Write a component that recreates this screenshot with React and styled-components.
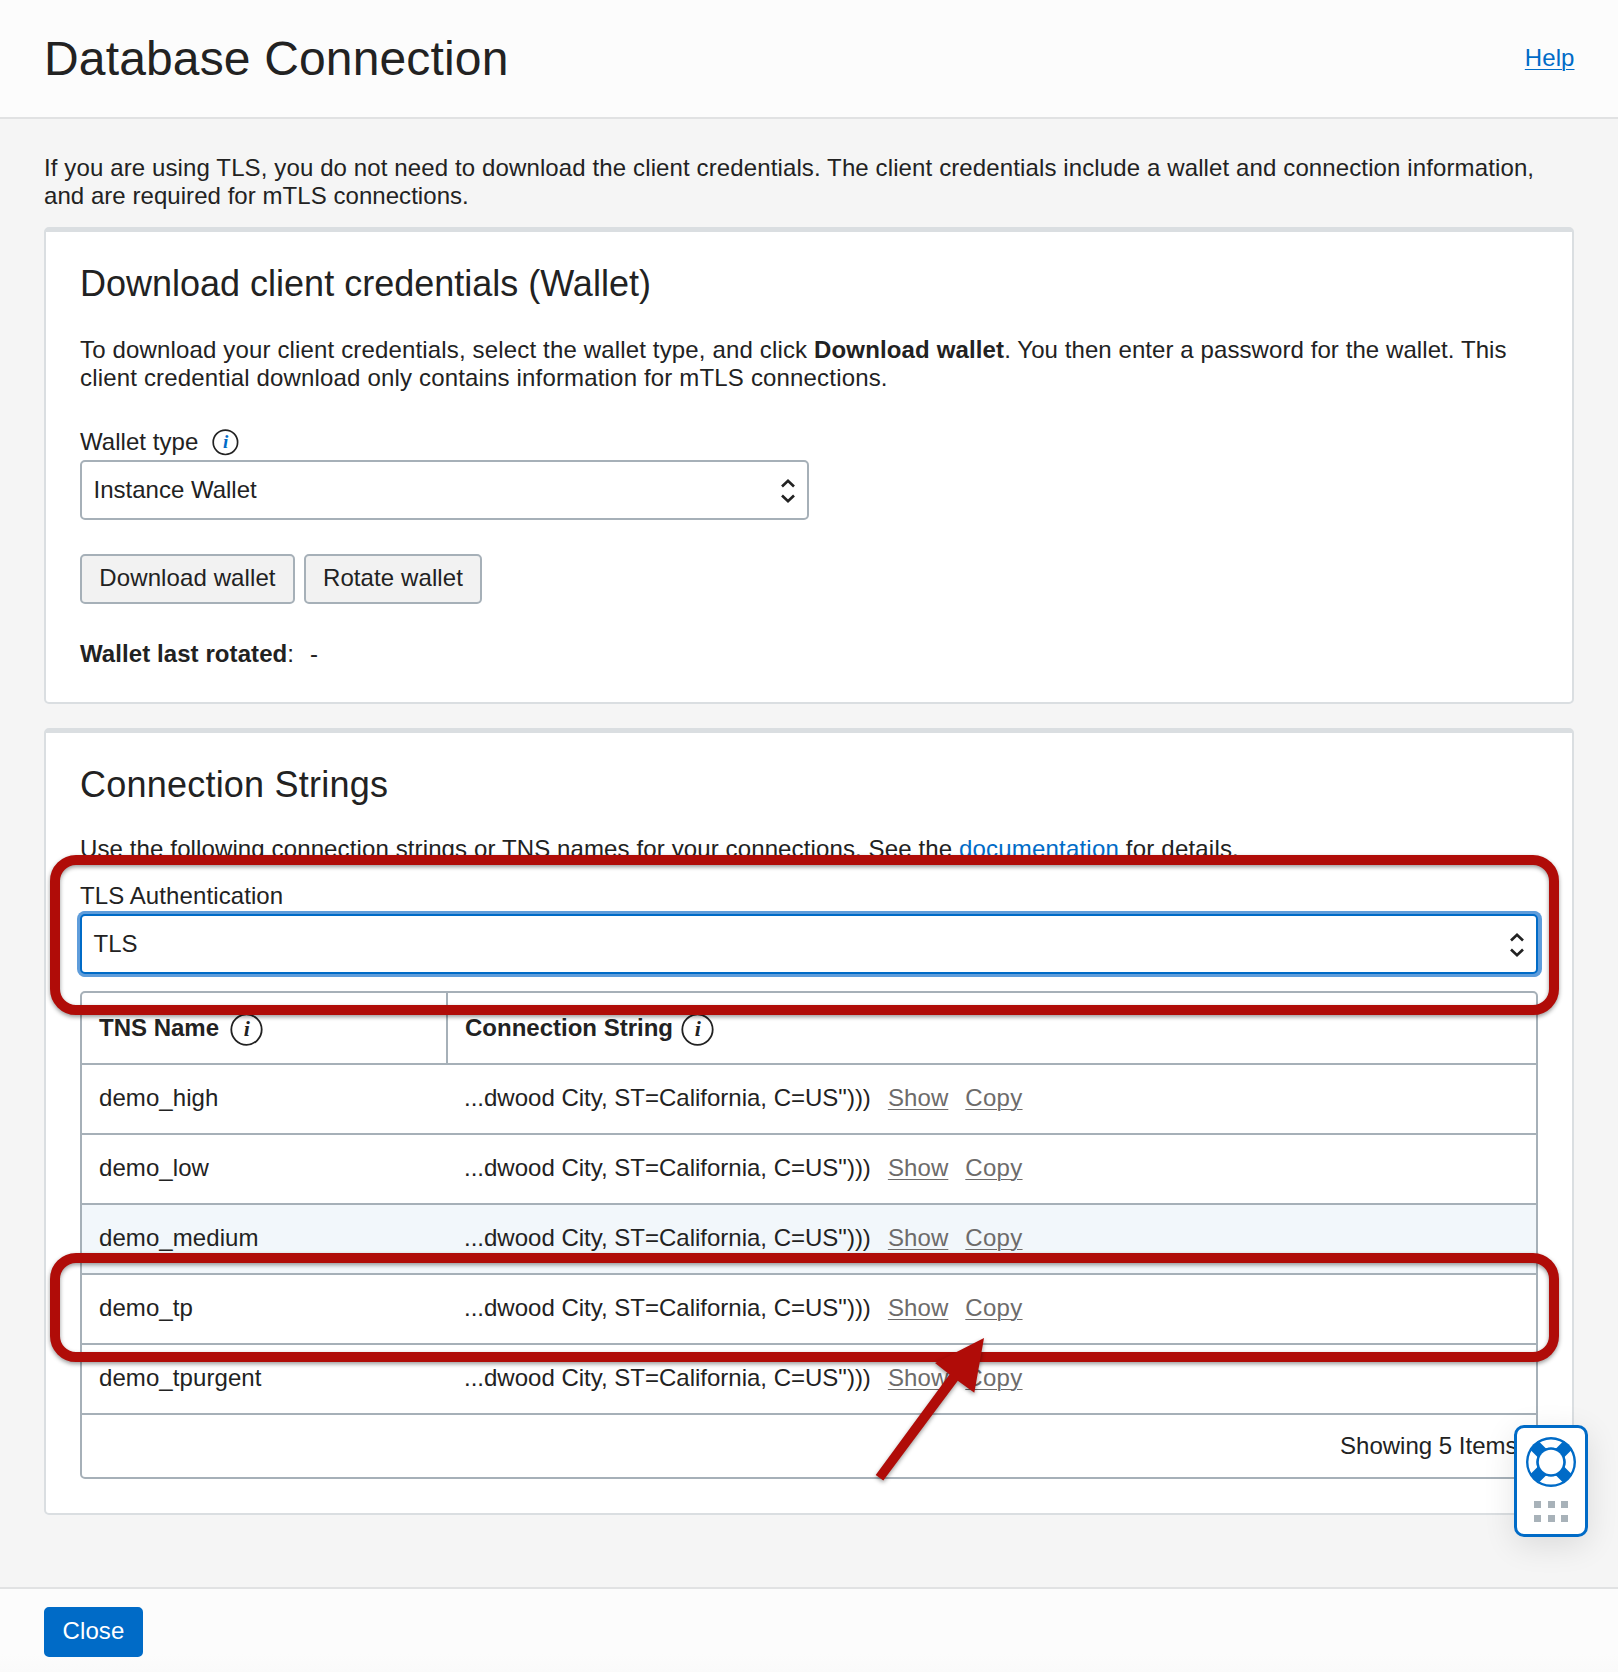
import React from 'react';
import styled, { createGlobalStyle, css } from 'styled-components';

const ink = '#222222';
const blue = '#006bc7';
const line = '#a6b0b8';
const cardLine = '#dadee1';
const annotation = '#b00c08';

const GlobalStyle = createGlobalStyle`
  *, *::before, *::after { box-sizing: border-box; }
  body {
    margin: 0;
    background: #f5f5f5;
    color: ${ink};
    font: 24px/28px "Liberation Sans", Arial, sans-serif;
  }
`;

const Page = styled.div`
  position: relative;
  display: flex;
  flex-direction: column;
  width: 1618px;
  height: 1672px;
  overflow: hidden;
  background: #f5f5f5;
`;

const Header = styled.header`
  display: flex;
  justify-content: space-between;
  align-items: flex-start;
  height: 119px;
  padding: 32px 43.5px 0 44px;
  background: #fcfcfc;
  border-bottom: 2px solid #e1e2e3;
`;

const Title = styled.h1`
  margin: 0;
  font-size: 48px;
  font-weight: 400;
  line-height: 54px;
  letter-spacing: 0.15px;
`;

const Link = styled.a`
  color: ${(p) => (p.$muted ? '#6d6b6a' : blue)};
  text-decoration: underline;
  text-decoration-thickness: 1px;
  text-underline-offset: 3px;
  letter-spacing: ${(p) => p.$track || 0}px;
`;

const HelpLink = styled(Link)`
  margin-top: 12px;
`;

const Main = styled.main`
  flex: 1;
  padding: 35px 44px 0;
`;

const Tracked = styled.span`
  letter-spacing: ${(p) => p.$track}px;
`;

const Strong = styled.strong`
  font-weight: 700;
  letter-spacing: ${(p) => p.$track || 0.08}px;
`;

const Text = styled.p`
  margin: 0;
  white-space: nowrap;
`;

const Card = styled.section`
  margin-top: ${(p) => p.$gap}px;
  padding: 31px 34px ${(p) => p.$bottom}px;
  background: #fff;
  border: 2px solid ${cardLine};
  border-top-width: 5px;
  border-radius: 5px;
`;

const CardTitle = styled.h2`
  margin: 0 0 ${(p) => p.$after}px;
  font-size: 36px;
  font-weight: 400;
  line-height: 41px;
  letter-spacing: ${(p) => p.$track}px;
`;

const Label = styled.label`
  display: flex;
  align-items: flex-start;
  gap: 14px;
  height: 28px;
  margin: ${(p) => p.$before}px 0 ${(p) => p.$after}px;
  letter-spacing: ${(p) => p.$track || 0}px;
`;

const SelectBox = styled.div`
  display: flex;
  justify-content: space-between;
  align-items: flex-start;
  width: ${(p) => (p.$half ? '729px' : '100%')};
  height: 60px;
  padding: 14px 12px 0 11.5px;
  background: #fff;
  border: 2px solid ${line};
  border-radius: 5px;
  ${(p) =>
    p.$focused &&
    css`
      border-color: ${blue};
      box-shadow: 0 0 0 3px #5f9ddb, 1px 0 0 3px #5f9ddb;
    `}
`;

const Chevrons = styled.svg`
  width: 14px;
  height: 26px;
  margin-top: 2px;
`;

const ButtonRow = styled.div`
  display: flex;
  gap: 9px;
  margin-top: 34px;
`;

const Button = styled.button`
  display: block;
  width: ${(p) => p.$width}px;
  height: 50px;
  padding: 0 0 2px;
  border: 2px solid ${(p) => (p.$primary ? blue : line)};
  border-radius: 5px;
  background: ${(p) => (p.$primary ? blue : '#f2f2f2')};
  color: ${(p) => (p.$primary ? '#fff' : ink)};
  font: inherit;
  letter-spacing: 0.1px;
`;

const Rotated = styled(Text)`
  display: flex;
  margin-top: 36px;
`;

const Dash = styled.span`
  margin-left: 16px;
`;

const Table = styled.div`
  margin-top: 17px;
  border: 2px solid ${line};
  border-radius: 5px;
`;

const HeadRow = styled.div`
  display: grid;
  grid-template-columns: 366px 1fr;
  height: 72px;
  border-bottom: 2px solid ${line};
  font-weight: 700;
`;

const HeadCell = styled.div`
  display: flex;
  align-items: flex-start;
  gap: ${(p) => p.$gap}px;
  padding: 21px 0 0 17px;

  &:first-child {
    border-right: 2px solid ${line};
  }
`;

const Row = styled.div`
  display: grid;
  grid-template-columns: 366px 1fr;
  height: 70px;
  padding-top: 18.5px;
  border-bottom: 2px solid ${line};
  background: ${(p) => (p.$hovered ? '#f2f7fb' : '#fff')};
`;

const NameCell = styled.div`
  padding-left: 17px;
  letter-spacing: 0.08px;
`;

const StringCell = styled.div`
  display: flex;
  gap: 17px;
  padding-left: 16px;
  letter-spacing: 0;
  white-space: nowrap;
`;

const TableFooter = styled.div`
  height: 62px;
  padding: 17px 18.5px 0 0;
  text-align: right;
`;

const Footer = styled.footer`
  height: 85px;
  padding: 18px 44px 0;
  border-top: 2px solid #e1e2e3;
  background: linear-gradient(#fcfcfc 78%, #fafafa);
`;

const Highlight = styled.div`
  position: absolute;
  left: 50.3px;
  top: ${(p) => p.$top}px;
  width: 1509px;
  height: ${(p) => p.$height}px;
  border: 10px solid ${annotation};
  border-radius: 26px;
  filter: drop-shadow(0 2px 2px rgba(0, 0, 0, 0.4));
  pointer-events: none;
`;

const Arrow = styled.svg`
  position: absolute;
  left: 870px;
  top: 1330px;
  width: 120px;
  height: 160px;
  filter: drop-shadow(0 2px 2px rgba(0, 0, 0, 0.4));
  pointer-events: none;
`;

const Widget = styled.div`
  position: absolute;
  left: 1514px;
  top: 1425px;
  display: flex;
  flex-direction: column;
  align-items: center;
  width: 74px;
  height: 112px;
  padding-top: 9px;
  background: #fff;
  border: 3px solid ${blue};
  border-radius: 10px;
  box-shadow: 0 8px 32px rgba(0, 0, 0, 0.11);
`;

const Dots = styled.div`
  display: grid;
  grid-template-columns: repeat(3, 7px);
  grid-auto-rows: 7px;
  gap: 6.5px;
  margin-top: 14px;
`;

const Dot = styled.span`
  background: #a8b2b9;
`;

const InfoSvg = styled.svg`
  flex: none;
  margin-top: ${(p) => p.$drop || 0}px;
  font-family: "Liberation Serif", serif;
  font-style: italic;
  font-weight: 700;
`;

function SmallInfo() {
  return (
    <InfoSvg width="27" height="27" viewBox="0 0 27 27" $drop={1}>
      <circle cx="13.4" cy="13.3" r="12.2" fill="#fff" stroke={ink} strokeWidth="1.7" />
      <text x="13.6" y="19" fontSize="19" textAnchor="middle" fill={blue}>i</text>
    </InfoSvg>
  );
}

function LargeInfo() {
  return (
    <InfoSvg width="33" height="33" viewBox="0 0 33 33" $drop={-1}>
      <circle cx="16.5" cy="16.6" r="15.2" fill="#fff" stroke={ink} strokeWidth="1.8" />
      <text x="16.8" y="23" fontSize="22" textAnchor="middle" fill={ink}>i</text>
    </InfoSvg>
  );
}

function Select({ value, half, focused }) {
  return (
    <SelectBox $half={half} $focused={focused}>
      <span>{value}</span>
      <Chevrons viewBox="0 0 14 26" fill="none" stroke={ink} strokeWidth="2.7">
        <path d="M1 8.4 L7 2.8 L13 8.4" />
        <path d="M1 17.6 L7 23.2 L13 17.6" />
      </Chevrons>
    </SelectBox>
  );
}

function LifeBuoy() {
  return (
    <svg width="50" height="50" viewBox="-25 -25 50 50">
      <circle r="25" fill={blue} />
      <circle r="18.6" fill="none" stroke="#fff" strokeWidth="8" />
      <path d="M-17 -17 L17 17 M17 -17 L-17 17" stroke={blue} strokeWidth="12" />
      <circle r="14.6" fill={blue} />
      <circle r="12.2" fill="#fff" />
    </svg>
  );
}

const rows = ['demo_high', 'demo_low', 'demo_medium', 'demo_tp', 'demo_tpurgent'];

export default function App() {
  return (
    <>
      <GlobalStyle />
      <Page>
        <Header>
          <Title>Database Connection</Title>
          <HelpLink $track={0.08}>Help</HelpLink>
        </Header>

        <Main>
          <Text>
            <Tracked $track={0.119}>
              If you are using TLS, you do not need to download the client credentials. The client
              credentials include a wallet and connection information,
            </Tracked>
            <br />
            <Tracked $track={0.05}>and are required for mTLS connections.</Tracked>
          </Text>

          <Card $gap={17} $bottom={34}>
            <CardTitle $after={32} $track={0}>Download client credentials (Wallet)</CardTitle>
            <Text>
              <Tracked $track={0.155}>
                To download your client credentials, select the wallet type, and click{' '}
              </Tracked>
              <Strong $track={0.14}>Download wallet</Strong>
              <Tracked $track={0.08}>. You then enter a password for the wallet. This</Tracked>
              <br />
              <Tracked $track={0.17}>
                client credential download only contains information for mTLS connections.
              </Tracked>
            </Text>
            <Label $before={36} $after={4} $track={0.05}>
              Wallet type
              <SmallInfo />
            </Label>
            <Select half value="Instance Wallet" />
            <ButtonRow>
              <Button $width={215}>Download wallet</Button>
              <Button $width={178}>Rotate wallet</Button>
            </ButtonRow>
            <Rotated>
              <Strong>Wallet last rotated</Strong>:<Dash>-</Dash>
            </Rotated>
          </Card>

          <Card $gap={24} $bottom={34}>
            <CardTitle $after={30} $track={0.22}>Connection Strings</CardTitle>
            <Text>
              <Tracked $track={0.12}>
                Use the following connection strings or TNS names for your connections. See the{' '}
              </Tracked>
              <Link $track={0.2}>documentation</Link>
              <Tracked $track={0.2}> for details.</Tracked>
            </Text>
            <Label $before={19} $after={4} $track={0.1}>TLS Authentication</Label>
            <Select focused value="TLS" />

            <Table>
              <HeadRow>
                <HeadCell $gap={10.5}>
                  TNS Name
                  <LargeInfo />
                </HeadCell>
                <HeadCell $gap={8.5}>
                  Connection String
                  <LargeInfo />
                </HeadCell>
              </HeadRow>
              {rows.map((name) => (
                <Row key={name} $hovered={name === 'demo_medium'}>
                  <NameCell>{name}</NameCell>
                  <StringCell>
                    <span>...dwood City, ST=California, C=US")))</span>
                    <Link $muted $track={0.1}>Show</Link>
                    <Link $muted $track={0.3}>Copy</Link>
                  </StringCell>
                </Row>
              ))}
              <TableFooter>Showing 5 Items</TableFooter>
            </Table>
          </Card>
        </Main>

        <Footer>
          <Button $primary $width={99}>Close</Button>
        </Footer>

        <Highlight $top={855} $height={160} />
        <Highlight $top={1253} $height={109} />
        <Arrow viewBox="870 1330 120 160" fill={annotation}>
          <path d="M984 1338 L974.3 1392.7 L957.8 1380.8 L883.3 1480.6 L875.7 1475 L949.5 1374.5 L935 1363 Z" />
        </Arrow>
        <Widget>
          <LifeBuoy />
          <Dots>
            {[0, 1, 2, 3, 4, 5].map((n) => (
              <Dot key={n} />
            ))}
          </Dots>
        </Widget>
      </Page>
    </>
  );
}
